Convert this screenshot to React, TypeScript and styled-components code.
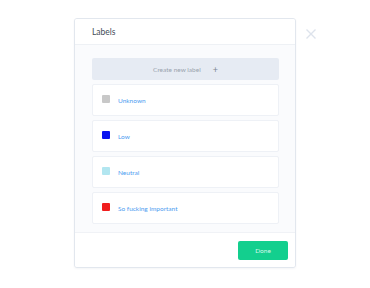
import React from "react";
import styled, { createGlobalStyle } from "styled-components";

const Global = createGlobalStyle`
  html, body { margin: 0; padding: 0; background: #ffffff; }
  body { font-family: Lato, "Open Sans", sans-serif; }
`;

const Stage = styled.div`
  width: 370px;
  height: 288px;
  display: flex;
  align-items: flex-start;
  padding: 18px 0 0 74px;
  box-sizing: border-box;
  gap: 9px;
`;

const Modal = styled.div`
  width: 222px;
  height: 250px;
  box-sizing: border-box;
  border: 1px solid #e2e7ee;
  border-radius: 3px;
  background: #fafbfd;
  display: flex;
  flex-direction: column;
  overflow: hidden;
  box-shadow: 0 1px 2px rgba(30, 50, 90, 0.05);
`;

const Header = styled.div`
  height: 25px;
  flex: none;
  background: #ffffff;
  border-bottom: 1px solid #eef1f5;
  display: flex;
  align-items: center;
  padding-left: 17px;
  font-size: 8.5px;
  font-weight: 400;
  color: #434c58;
`;

const Body = styled.div`
  flex: 1;
  padding: 13px 16px 0 17px;
  display: flex;
  flex-direction: column;
  gap: 4px;
`;

const CreateButton = styled.div`
  height: 22px;
  background: #e6ebf3;
  border-radius: 2px;
  display: flex;
  align-items: center;
  justify-content: center;
  gap: 12px;
  font-size: 6.5px;
  color: #9aa3ae;
`;

const Plus = styled.span`
  font-size: 9px;
  color: #7d8792;
  line-height: 1;
`;

const Card = styled.div`
  height: 32px;
  box-sizing: border-box;
  background: #ffffff;
  border: 1px solid #eef1f6;
  border-radius: 2px;
  display: flex;
  align-items: center;
  padding-left: 9px;
  gap: 8px;
`;

const Swatch = styled.span<{ $color: string }>`
  width: 8px;
  height: 8px;
  border-radius: 1px;
  background: ${(p) => p.$color};
  flex: none;
  margin-top: -2px;
`;

const LabelName = styled.span`
  font-size: 6.5px;
  color: #4d9cf0;
`;

const Footer = styled.div`
  height: 34px;
  flex: none;
  background: #ffffff;
  border-top: 1px solid #f0f2f6;
  display: flex;
  align-items: center;
  justify-content: flex-end;
  padding-right: 7px;
  margin-top: 8px;
`;

const DoneButton = styled.div`
  width: 50px;
  height: 19px;
  background: #13cf8e;
  border-radius: 2px;
  display: flex;
  align-items: center;
  justify-content: center;
  font-size: 6.5px;
  color: #d8f7ea;
`;

const Close = styled.div`
  width: 12px;
  height: 12px;
  margin-top: 6px;
`;

const labels = [
  { name: "Unknown", color: "#c8c8c8" },
  { name: "Low", color: "#0a14f0" },
  { name: "Neutral", color: "#b2e6f0" },
  { name: "So fucking important", color: "#f01e1e" },
];

export default function App() {
  return (
    <>
      <Global />
      <Stage>
        <Modal>
          <Header>Labels</Header>
          <Body>
            <CreateButton>
              <span>Create new label</span>
              <Plus>+</Plus>
            </CreateButton>
            {labels.map((l) => (
              <Card key={l.name}>
                <Swatch $color={l.color} />
                <LabelName>{l.name}</LabelName>
              </Card>
            ))}
          </Body>
          <Footer>
            <DoneButton>Done</DoneButton>
          </Footer>
        </Modal>
        <Close>
          <svg width="12" height="12" viewBox="0 0 12 12">
            <path d="M1.5 1.5 L10.5 10.5 M10.5 1.5 L1.5 10.5" stroke="#dde3ec" strokeWidth="1.4" />
          </svg>
        </Close>
      </Stage>
    </>
  );
}
